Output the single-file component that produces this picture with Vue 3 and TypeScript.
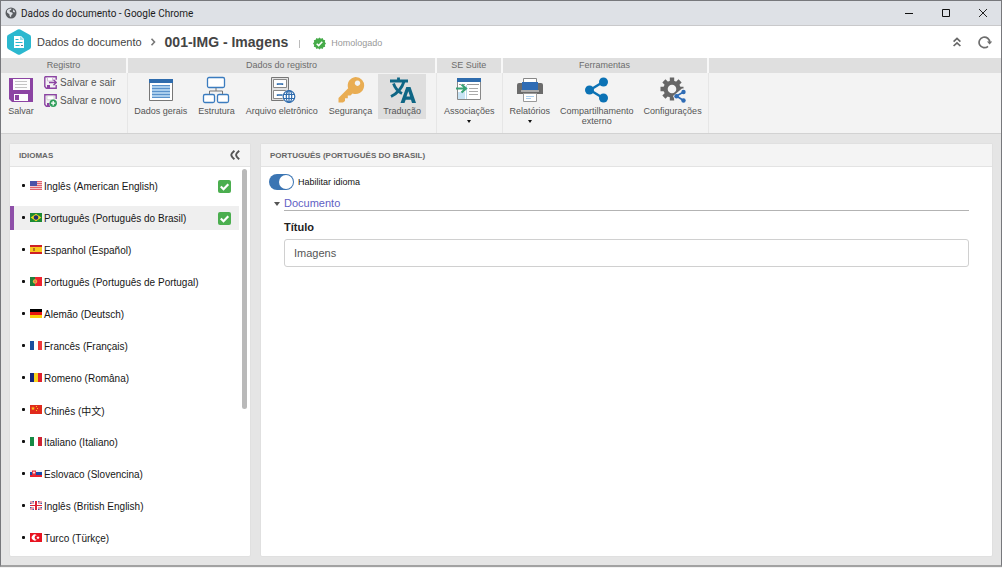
<script setup lang="ts">
import { ref } from 'vue'

interface Shape {
  d: string
  fill: string
}

interface Language {
  id: string
  label: string
  flag: Shape[]
  enabled?: boolean
}

const bandsV = (a: string, b: string, c: string): Shape[] => [
  { d: 'M0 0h4v9H0z', fill: a },
  { d: 'M4 0h4v9H4z', fill: b },
  { d: 'M8 0h4v9H8z', fill: c },
]

const languages: Language[] = [
  {
    id: 'en-us',
    label: 'Inglês (American English)',
    enabled: true,
    flag: [
      { d: 'M0 0h12v9H0z', fill: '#f3c9cc' },
      { d: 'M0 0h12v1H0zM0 2h12v1H0zM0 4h12v1H0zM0 6h12v1H0zM0 8h12v1H0z', fill: '#e0636d' },
      { d: 'M0 0h7v5H0z', fill: '#4a52a8' },
    ],
  },
  {
    id: 'pt-br',
    label: 'Português (Português do Brasil)',
    enabled: true,
    flag: [
      { d: 'M0 0h12v9H0z', fill: '#1c8a34' },
      { d: 'M6 .8l5.300 3.700l-5.300 3.700l-5.300-3.700z', fill: '#f3d91c' },
      { d: 'M6 2.200a2.300 2.300 0 1 0 .01 0z', fill: '#22306f' },
    ],
  },
  {
    id: 'es',
    label: 'Espanhol (Español)',
    flag: [
      { d: 'M0 0h12v9H0z', fill: '#f8c81c' },
      { d: 'M0 0h12v2H0zM0 7h12v2H0z', fill: '#cf1f26' },
      { d: 'M3 3h2v3H3z', fill: '#b5701f' },
    ],
  },
  {
    id: 'pt-pt',
    label: 'Português (Português de Portugal)',
    flag: [
      { d: 'M0 0h12v9H0z', fill: '#ee2430' },
      { d: 'M0 0h5v9H0z', fill: '#1f7f3d' },
      { d: 'M5 2.300a2.200 2.200 0 1 0 .01 0z', fill: '#e6c53a' },
      { d: 'M5 3.300a1.200 1.200 0 1 0 .01 0z', fill: '#e9695e' },
    ],
  },
  {
    id: 'de',
    label: 'Alemão (Deutsch)',
    flag: [
      { d: 'M0 0h12v3H0z', fill: '#000000' },
      { d: 'M0 3h12v3H0z', fill: '#e8150f' },
      { d: 'M0 6h12v3H0z', fill: '#fbcb0a' },
    ],
  },
  { id: 'fr', label: 'Francês (Français)', flag: bandsV('#1c4f9f', '#ffffff', '#ee3b3b') },
  { id: 'ro', label: 'Romeno (Româna)', flag: bandsV('#14267c', '#f7d21e', '#e0202c') },
  {
    id: 'zh',
    label: 'Chinês (中文)',
    flag: [
      { d: 'M0 0h12v9H0z', fill: '#e02a1c' },
      { d: 'M3 1.200l.6 1.500h1.500l-1.200 1l.5 1.500l-1.400-.9l-1.400.9l.5-1.500l-1.200-1h1.500zM6 1h1v1H6zM7 3h1v1H7zM6 5h1v1H6z', fill: '#f9c722' },
    ],
  },
  { id: 'it', label: 'Italiano (Italiano)', flag: bandsV('#168a45', '#ffffff', '#cd2434') },
  {
    id: 'sk',
    label: 'Eslovaco (Slovencina)',
    flag: [
      { d: 'M0 1h12v2H0z', fill: '#f0f0f4' },
      { d: 'M0 3h12v3H0z', fill: '#1749a4' },
      { d: 'M0 6h12v2H0z', fill: '#e8202c' },
      { d: 'M2 1.500h4v4l-2 1.700l-2-1.700z', fill: '#e5303d' },
      { d: 'M3.600 2.200h.8v.8h.8v.8h-.8V5h-.8V3.800h-.8V3h.8z', fill: '#ffffff' },
    ],
  },
  {
    id: 'en-gb',
    label: 'Inglês (British English)',
    flag: [
      { d: 'M0 0h12v9H0z', fill: '#3c58a8' },
      { d: 'M0 0h2L12 7.500V9h-2L0 1.500zM12 0v1.500L2 9H0V7.500L10 0z', fill: '#e9a3ae' },
      { d: 'M4 0h4v9H4zM0 3h12v3H0z', fill: '#ffffff' },
      { d: 'M5 0h2v9H5zM0 4h12v1H0z', fill: '#dc2036' },
    ],
  },
  {
    id: 'tr',
    label: 'Turco (Türkçe)',
    flag: [
      { d: 'M0 0h12v9H0z', fill: '#e81320' },
      { d: 'M6.800 2.300A3 3 0 1 0 6.800 6.700A2.200 2.200 0 1 1 6.800 2.300z', fill: '#ffffff' },
      { d: 'M8 3.100l.5.9l1.100.1l-.8.8l.2 1.100l-1-.5l-1 .5l.2-1.100l-.8-.8l1.100-.1z', fill: '#ffffff' },
    ],
  },
]

const selected = ref('pt-br')
const enabled = ref(true)
const title = ref('Imagens')
const sectionOpen = ref(true)
</script>

<template>
  <div class="window">
    <header class="titlebar">
      <svg class="globe" viewBox="0 0 12 12" aria-hidden="true">
        <circle cx="6" cy="6" r="5.500" fill="#5a5d61" />
        <path d="M2 3.500C3 2 5 1.300 6.500 1.500L6 3l-1.500.6L5 5l2.200.4.6 1.600-1.400 1-.4 2.200L4.600 9 4.400 7.200 2 5.500zM8.200 2.200l1.800 2-.4 1.400L8 4.800z" fill="#dee1e6" />
      </svg>
      <span class="caption">Dados do documento - Google Chrome</span>
      <div class="controls">
        <button type="button" aria-label="Minimizar">
          <svg viewBox="0 0 10 10"><path d="M1 5.500h8" stroke="#111" fill="none" /></svg>
        </button>
        <button type="button" aria-label="Maximizar">
          <svg viewBox="0 0 10 10"><path d="M1.500 1.500h7v7h-7z" stroke="#111" fill="none" /></svg>
        </button>
        <button type="button" aria-label="Fechar">
          <svg viewBox="0 0 10 10"><path d="M1 1l8 8M9 1L1 9" stroke="#222" fill="none" /></svg>
        </button>
      </div>
    </header>

    <div class="heading">
      <svg class="logo" viewBox="0 0 24 26" aria-hidden="true">
        <path d="M10.800.6a2.400 2.400 0 0 1 2.400 0l9.400 5.200A2.400 2.400 0 0 1 24 8v10a2.400 2.400 0 0 1-1.400 2.200l-9.400 5.200a2.400 2.400 0 0 1-2.400 0L1.400 20.200A2.400 2.400 0 0 1 0 18V8a2.400 2.400 0 0 1 1.400-2.200z" fill="#2bb8cf" />
        <path d="M7 7h7l3 3v9H7z" fill="#ffffff" />
        <path d="M13 7v4h4z" fill="#9adfe9" />
        <path d="M8.500 10.500h3M8.500 13.500h7M8.500 16.500h4" stroke="#2bb8cf" />
        <path d="M14 16.500h2" stroke="#5b7f95" />
      </svg>
      <span class="crumb">Dados do documento</span>
      <svg class="chevron" viewBox="0 0 6 8" aria-hidden="true"><path d="M1.500.7l3 3.300l-3 3.300" fill="none" stroke="#777" stroke-width="1.600" /></svg>
      <h1>001-IMG - Imagens</h1>
      <span class="divider"></span>
      <svg class="seal" viewBox="0 0 14 14" aria-hidden="true">
        <path d="M7 .5l1.500 1.300 1.900-.7.7 1.900 2 .4-.4 2L14 7l-1.300 1.600.4 2-2 .4-.7 1.900-1.900-.7L7 13.500l-1.500-1.300-1.900.7-.7-1.900-2-.4.4-2L0 7l1.300-1.600-.4-2 2-.4.7-1.900 1.900.7z" fill="#46ab49" />
        <path d="M4 7.200l2.100 2.100L10 5.200" fill="none" stroke="#fff" stroke-width="1.700" />
      </svg>
      <span class="status">Homologado</span>
      <div class="heading-actions">
        <button type="button" aria-label="Recolher">
          <svg width="8" height="10" viewBox="0 0 8 10"><path d="M.6 4.600L4 1.400l3.400 3.200M.6 9L4 5.800L7.400 9" fill="none" stroke="#666" stroke-width="1.700" /></svg>
        </button>
        <button type="button" aria-label="Atualizar">
          <svg width="14" height="14" viewBox="0 0 14 14">
            <path d="M10 11.300A5.300 5.300 0 1 1 11.700 7.500" fill="none" stroke="#6e6e6e" stroke-width="1.700" />
            <path d="M8.900 6.500H14.200l-2.600 3z" fill="#6e6e6e" />
          </svg>
        </button>
      </div>
    </div>

    <nav class="ribbon">
      <section class="group">
        <h2>Registro</h2>
        <div class="tools registro">
          <button type="button" class="tool">
            <svg class="icon" viewBox="0 0 28 28">
              <path d="M2 2h24v24H5l-3-3z" fill="#8c44a3" />
              <path d="M6 3h17v11H6z" fill="#fdfdfd" />
              <path d="M8 5.500h12M8 8.500h12M8 11.500h12" stroke="#c4c4c4" />
              <path d="M7 18h14v7H7z" fill="#fdfdfd" />
              <path d="M8 19h4v5H8z" fill="#8c44a3" />
            </svg>
            <span>Salvar</span>
          </button>
          <div class="stack">
            <button type="button" class="mini">
              <svg viewBox="0 0 13 13">
                <path d="M.8.800h11.400v3M.8.800v9.700l1.500 1.700h9.900V9" fill="none" stroke="#8c44a3" stroke-width="1.400" />
                <path d="M3.500 1.500v3.500h5V1.500z" fill="#fff" stroke="#c9b0d2" stroke-width=".8" />
                <path d="M3 9h3v3H3z" fill="#8c44a3" />
                <path d="M5 6.500h7M9.500 3.700l2.800 2.800l-2.800 2.800" fill="none" stroke="#8c44a3" stroke-width="1.400" />
              </svg>
              <span>Salvar e sair</span>
            </button>
            <button type="button" class="mini">
              <svg viewBox="0 0 13 13">
                <path d="M12.200 5V.8H.8v9.700l1.500 1.700H6" fill="none" stroke="#8c44a3" stroke-width="1.400" />
                <path d="M3 1.800h7v4H3z" fill="#fff" stroke="#bbb" stroke-width=".6" />
                <path d="M3 9h2.500v3H3z" fill="#8c44a3" />
                <circle cx="9.200" cy="9.200" r="3.700" fill="#2f9e5b" />
                <path d="M9.200 7v4.400M7 9.200h4.400" stroke="#fff" stroke-width="1.300" />
              </svg>
              <span>Salvar e novo</span>
            </button>
          </div>
        </div>
      </section>

      <section class="group">
        <h2>Dados do registro</h2>
        <div class="tools dados">
          <button type="button" class="tool">
            <svg class="icon" viewBox="0 0 28 28">
              <path d="M2.500 4.500h23v20h-23z" fill="#fff" stroke="#777" />
              <path d="M2 3h24v4H2z" fill="#2f6cad" />
              <path d="M5 9h18v13H5z" fill="#a9cdec" />
              <path d="M5 9.500h18M5 12.500h18M5 15.500h18M5 18.500h18M5 21.500h18" stroke="#5a92cb" />
            </svg>
            <span>Dados gerais</span>
          </button>
          <button type="button" class="tool">
            <svg class="icon" viewBox="0 0 28 28">
              <g fill="#fff" stroke="#3b7cbf" stroke-width="1.300">
                <rect x="5.500" y="1.500" width="17" height="10" rx="1.500" />
                <rect x="1.500" y="18.500" width="11" height="8" rx="1.500" />
                <rect x="15.500" y="18.500" width="11" height="8" rx="1.500" />
              </g>
              <path d="M14 12v3M7.500 18v-3h13v3" fill="none" stroke="#777" />
            </svg>
            <span>Estrutura</span>
          </button>
          <button type="button" class="tool">
            <svg class="icon" viewBox="0 0 28 28">
              <path d="M3.500 1.500h17v23h-17z" fill="#e2e2e2" stroke="#777" />
              <path d="M5.500 3.500h13v8h-13zM5.500 14.500h13v8h-13z" fill="#fff" stroke="#888" />
              <path d="M9.500 9V8h5v1M9.500 20v-1h5v1" fill="none" stroke="#2f6cad" stroke-width="1.400" />
              <circle cx="21" cy="20.500" r="6.800" fill="#f3f3f3" />
              <g fill="none" stroke="#2f6cad" stroke-width="1.200">
                <circle cx="21" cy="20.500" r="5.800" fill="#fff" />
                <ellipse cx="21" cy="20.500" rx="2.700" ry="5.800" />
                <path d="M21 14.700v11.600M15.800 18.500h10.400M15.800 22.500h10.400" />
              </g>
            </svg>
            <span>Arquivo eletrônico</span>
          </button>
          <button type="button" class="tool">
            <svg class="icon" viewBox="0 0 28 28">
              <path fill-rule="evenodd" d="M18.500 1a8.500 8.500 0 1 1-3 16.400l-2 2.100h-2.700v2.800H8v2.700L6 26.500H1.500V22L11.200 12.300A8.500 8.500 0 0 1 18.500 1zM20.500 4.500a2.700 2.700 0 1 0 .01 0z" fill="#e9ad53" />
            </svg>
            <span>Segurança</span>
          </button>
          <button type="button" class="tool active">
            <svg class="icon" viewBox="0 0 28 28">
              <g fill="none" stroke="#0f6685" stroke-width="2.800">
                <path d="M2 5h18M10.500 1.500v3M5.500 7.500C7 12 10 15.500 14 17.500M16 5.500C14 12 9 17.500 3 20.500" />
              </g>
              <path fill-rule="evenodd" d="M18.300 11h4.200L28 27h-4l-1-3.300h-5.300L16.500 27h-4zM20.300 15.300l-1.800 5.200h3.600z" fill="#0f6685" />
            </svg>
            <span>Tradução</span>
          </button>
        </div>
      </section>

      <section class="group">
        <h2>SE Suite</h2>
        <div class="tools suite">
          <button type="button" class="tool">
            <svg class="icon" viewBox="0 0 28 28">
              <path d="M2.500 3.500h23v20h-23z" fill="#fff" stroke="#888" />
              <path d="M2 2h24v4H2z" fill="#2f6cad" />
              <path d="M3 16h7v7H3z" fill="#c8e4f5" />
              <path d="M11.500 9v14" stroke="#b9d7ea" />
              <path d="M4 8.500h2M8 8.500h2M12 8.500h12" stroke="#999" />
              <path d="M14 12.500h9M14 15.500h9M14 18.500h9" stroke="#aaa" />
              <path d="M1 12.500h9M6.500 8.500l4.500 4l-4.500 4" fill="none" stroke="#38a274" stroke-width="2.200" />
            </svg>
            <span>Associações</span>
            <i class="caret"></i>
          </button>
        </div>
      </section>

      <section class="group">
        <h2>Ferramentas</h2>
        <div class="tools ferramentas">
          <button type="button" class="tool">
            <svg class="icon" viewBox="0 0 28 28">
              <path d="M7.500 2.500h13v6h-13z" fill="#fff" stroke="#888" />
              <path d="M3 7h22a2 2 0 0 1 2 2v9H1V9a2 2 0 0 1 2-2z" fill="#6b6b6b" />
              <path d="M6 6h16v8H6z" fill="#2f6cb5" />
              <path d="M5 15h18" stroke="#eee" />
              <path d="M7.500 17.500h13v8h-13z" fill="#fff" stroke="#999" />
              <path d="M10 20.500h8M10 22.500h5" stroke="#a9cdec" />
            </svg>
            <span>Relatórios</span>
            <i class="caret"></i>
          </button>
          <button type="button" class="tool">
            <svg class="icon" viewBox="0 0 28 28">
              <path d="M20 6L7 14l13 8" fill="none" stroke="#0b72b5" stroke-width="2.400" />
              <g fill="#0b72b5">
                <circle cx="20.500" cy="6" r="4.500" />
                <circle cx="6.500" cy="14" r="4.500" />
                <circle cx="20.500" cy="22" r="4.500" />
              </g>
            </svg>
            <span>Compartilhamento<br />externo</span>
          </button>
          <button type="button" class="tool">
            <svg class="icon" viewBox="0 0 28 28">
              <g stroke="#666" stroke-width="4.400">
                <path d="M13 1.500v23M1.500 13h23M4.900 4.900l16.200 16.200M21.100 4.900L4.900 21.100" />
              </g>
              <circle cx="13" cy="13" r="8.600" fill="#666" />
              <circle cx="13" cy="13" r="4.300" fill="#f3f3f3" />
              <path d="M14 20l9-7.500h5v15H17.500z" fill="#f3f3f3" />
              <path d="M24.500 16l-7 4l7 4.500" fill="none" stroke="#2f6cb5" stroke-width="1.700" />
              <g fill="#2f6cb5">
                <circle cx="24.500" cy="16" r="2.200" />
                <circle cx="17.500" cy="20.200" r="2.200" />
                <circle cx="24.500" cy="24.500" r="2.200" />
              </g>
            </svg>
            <span>Configurações</span>
          </button>
        </div>
      </section>

      <div class="group rest"><div class="blank"></div></div>
    </nav>

    <main class="workspace">
      <aside class="panel languages">
        <div class="panel-head">
          <h3>Idiomas</h3>
          <button type="button" aria-label="Recolher painel">
            <svg width="10" height="10" viewBox="0 0 10 10"><path d="M4.400.8Q1.300 3.500 1.300 5t3.100 4.200M9.200.8Q6.100 3.500 6.100 5t3.100 4.200" fill="none" stroke="#555" stroke-width="1.900" /></svg>
          </button>
        </div>
        <div class="list-area">
          <ul>
            <li v-for="lang in languages" :key="lang.id">
              <button type="button" class="lang" :class="{ selected: lang.id === selected }" :lang="lang.id === 'zh' ? 'zh' : undefined" @click="selected = lang.id">
                <span class="dot"></span>
                <svg class="flag" viewBox="0 0 12 9" aria-hidden="true">
                  <path v-for="(s, i) in lang.flag" :key="i" :d="s.d" :fill="s.fill" />
                </svg>
                <span class="name">{{ lang.label }}</span>
                <svg v-if="lang.enabled" class="check" viewBox="0 0 13 13" aria-hidden="true">
                  <rect width="13" height="13" rx="2" fill="#4bae4f" />
                  <path d="M2.800 6.500l2.700 2.700l4.800-5" fill="none" stroke="#fff" stroke-width="2.200" />
                </svg>
              </button>
            </li>
          </ul>
          <div class="track"><div class="thumb"></div></div>
        </div>
      </aside>

      <section class="panel detail">
        <div class="panel-head">
          <h3>Português (Português do Brasil)</h3>
        </div>
        <div class="form">
          <label class="switch">
            <input v-model="enabled" type="checkbox" role="switch" />
            <span>Habilitar idioma</span>
          </label>
          <button type="button" class="section-toggle" :aria-expanded="sectionOpen" @click="sectionOpen = !sectionOpen">
            <i class="arrow"></i>
            <span>Documento</span>
          </button>
          <div v-if="sectionOpen" class="field">
            <label for="titulo">Título</label>
            <input id="titulo" v-model="title" type="text" />
          </div>
        </div>
      </section>
    </main>
  </div>
</template>

<style>
body {
  margin: 0;
  background: #f2f2f2;
}
</style>

<style scoped>
.window,
.window * {
  box-sizing: border-box;
}

.window {
  display: flex;
  flex-direction: column;
  min-height: calc(100vh - 1px);
  border: 1px solid #77787c;
  border-bottom: 2px solid #a2a2a2;
  background: #e5e5e5;
  font-family: 'Liberation Sans', Arial, 'Noto Sans CJK SC', sans-serif;
  font-size: 10px;
  color: #555;
}

h1,
h2,
h3,
ul {
  margin: 0;
  padding: 0;
}

button {
  margin: 0;
  padding: 0;
  border: 0;
  background: none;
  font: inherit;
  color: inherit;
  cursor: pointer;
}

svg {
  display: block;
  flex: none;
}

.titlebar {
  display: flex;
  align-items: center;
  height: 25px;
  padding-left: 4px;
  background: #dee1e6;
  border-bottom: 1px solid #c9c9cb;
}

.globe {
  width: 12px;
  height: 12px;
}

.caption {
  margin-left: 4px;
  font-family: Roboto, 'Noto Sans', sans-serif;
  font-size: 10px;
  color: #1c1c1c;
}

.controls {
  display: flex;
  margin-left: auto;
}

.controls button {
  display: flex;
  justify-content: center;
  width: 37px;
}

.controls svg {
  width: 10px;
  height: 10px;
}

.heading {
  display: flex;
  align-items: center;
  height: 32px;
  padding: 0 9px 0 6px;
  background: #fff;
}

.logo {
  width: 24px;
  height: 26px;
}

.crumb {
  margin-left: 6px;
  font-size: 11px;
  color: #444;
}

.chevron {
  width: 6px;
  height: 8px;
  margin: 0 9px 0 8px;
}

h1 {
  font-size: 14px;
  line-height: 16px;
  color: #444;
}

.divider {
  width: 1px;
  height: 8px;
  margin: 3px 13px 0 11px;
  background: #bbb;
}

.seal {
  width: 13px;
  height: 13px;
  margin-top: 2px;
}

.status {
  margin: 2px 0 0 5px;
  font-size: 9px;
  color: #999;
}

.heading-actions {
  display: flex;
  align-items: center;
  gap: 17px;
  margin-left: auto;
}

.ribbon {
  display: flex;
  background: #f3f3f3;
  border-bottom: 1px solid #d2d2d2;
}

.group {
  display: flex;
  flex-direction: column;
}

h2,
.blank {
  height: 15px;
  border-right: 2px solid #f8f8f8;
  background: #dfdfdf;
  font-size: 9px;
  font-weight: 400;
  line-height: 15px;
  text-align: center;
  color: #6c6c6c;
}

.rest {
  flex: 1;
}

.rest .blank {
  border: 0;
}

.tools {
  display: flex;
  gap: 1px;
  align-items: flex-start;
  height: 60px;
  border-right: 1px solid #e6e6e6;
}

.registro {
  gap: 4px;
  padding: 1px 6px 0 1px;
}

.dados {
  padding: 1px 10px 0 1px;
}

.suite {
  padding: 1px 2px 0 2px;
}

.ferramentas {
  gap: 0;
  padding: 1px 1px 0 2px;
}

.tool {
  display: flex;
  flex-direction: column;
  align-items: center;
  min-height: 45px;
  padding: 2px 5px 0;
  font-size: 9px;
  line-height: 10px;
  white-space: nowrap;
}

.tool.active {
  background: #dedede;
}

.icon {
  width: 28px;
  height: 28px;
  margin-bottom: 2px;
}

.caret {
  margin-top: 4px;
  border: 2px solid transparent;
  border-top: 3px solid #111;
  border-bottom: 0;
}

.stack {
  display: flex;
  flex-direction: column;
  gap: 5px;
  padding-top: 2px;
}

.mini {
  display: flex;
  align-items: center;
  gap: 3px;
  height: 13px;
  white-space: nowrap;
}

.mini svg {
  width: 13px;
  height: 13px;
}

.workspace {
  display: flex;
  flex: 1;
  gap: 9px;
  padding: 9px 8px 8px;
}

.panel {
  display: flex;
  flex-direction: column;
  border: 1px solid #e0e0e0;
  border-radius: 2px;
  background: #fff;
}

.languages {
  flex: 0 0 242px;
}

.detail {
  flex: 1;
  min-width: 0;
}

.panel-head {
  display: flex;
  align-items: center;
  justify-content: space-between;
  height: 23px;
  padding: 0 10px 0 9px;
  border-bottom: 1px solid #e3e3e3;
  background: #f4f4f4;
}

h3 {
  font-size: 8px;
  text-transform: uppercase;
  color: #666;
}

.list-area {
  display: flex;
  flex: 1;
}

ul {
  display: flex;
  flex: 1;
  flex-direction: column;
  gap: 8px;
  padding: 7px 0 6px;
  list-style: none;
}

.lang {
  display: flex;
  align-items: center;
  width: 100%;
  height: 24px;
  padding: 0 8px;
  border-left: 4px solid transparent;
  text-align: left;
  white-space: nowrap;
  color: #161616;
}

.lang.selected {
  border-left-color: #8e4fa8;
  background: #efefef;
}

.dot {
  width: 3px;
  height: 3px;
  margin-bottom: 2px;
  border-radius: 1px;
  background: #111;
}

.flag {
  width: 12px;
  height: 9px;
  margin: 0 2px 2px 5px;
}

.check {
  width: 13px;
  height: 13px;
  margin-left: auto;
}

.track {
  width: 11px;
  padding: 2px 3px 0;
}

.thumb {
  height: 62%;
  border-radius: 3px;
  background: #b9b9b9;
}

.form {
  padding: 7px 23px 8px 8px;
}

.switch {
  display: flex;
  align-items: center;
  gap: 4px;
  width: max-content;
  font-size: 9px;
  color: #111;
}

.switch input {
  display: flex;
  align-items: center;
  appearance: none;
  width: 25px;
  height: 16px;
  margin: 0;
  padding: 1px;
  border-radius: 8px;
  background: #aaa;
}

.switch input::before {
  content: '';
  width: 14px;
  height: 14px;
  border-radius: 50%;
  background: #fff;
}

.switch input:checked {
  justify-content: flex-end;
  background: #3b75b3;
}

.section-toggle {
  display: flex;
  align-items: center;
  gap: 4px;
  width: 100%;
  margin-top: 6px;
  padding-left: 5px;
  font-size: 11px;
  line-height: 14px;
  text-align: left;
  color: #5f5fc4;
}

.section-toggle span {
  flex: 1;
  border-bottom: 1px solid #b3b3b3;
}

.arrow {
  border: 3px solid transparent;
  border-top: 4px solid #555;
  border-bottom: 0;
}

.field {
  display: flex;
  flex-direction: column;
  gap: 5px;
  padding: 9px 0 0 15px;
}

.field label {
  font-size: 11px;
  font-weight: 700;
  line-height: 14px;
  color: #222;
}

.field input {
  width: 100%;
  height: 28px;
  padding: 0 9px;
  border: 1px solid #d0d0d0;
  border-radius: 3px;
  background: #fff;
  font: inherit;
  font-size: 11px;
  color: #555;
}
</style>
